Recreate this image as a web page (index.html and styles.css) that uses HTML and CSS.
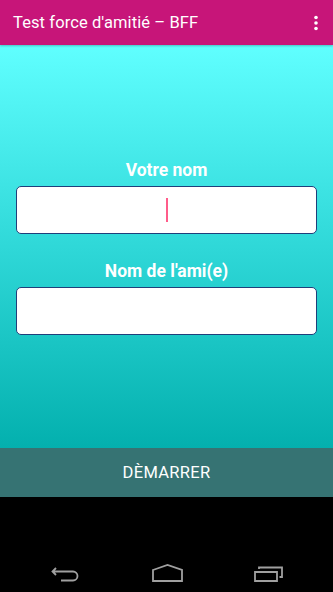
FILE: index.html
```html
<!DOCTYPE html>
<html>
<head>
<meta charset="utf-8">
<link rel="stylesheet" href="styles.css">
</head>
<body>
<div class="screen">
  <header class="appbar">
    <span class="title">Test force d'amitié – BFF</span>
    <svg class="menu" width="6" height="16" viewBox="0 0 6 16"><circle cx="3" cy="2.5" r="1.8" fill="#fff"/><circle cx="3" cy="8" r="1.8" fill="#fff"/><circle cx="3" cy="13.5" r="1.8" fill="#fff"/></svg>
  </header>
  <main class="content">
    <div class="group">
      <div class="label">Votre nom</div>
      <div class="field"><span class="cursor"></span></div>
    </div>
    <div class="group second">
      <div class="label">Nom de l'ami(e)</div>
      <div class="field"></div>
    </div>
  </main>
  <div class="start">DÈMARRER</div>
  <nav class="navbar">
    <svg class="nav" width="30" height="16" viewBox="0 0 30 16"><path d="M5 2 L1.5 5.5 L5 9 M1.5 5.5 H22 A4.5 4.5 0 0 1 22 14.5 H10" fill="none" stroke="#a0a0a0" stroke-width="1.8"/></svg>
    <svg class="nav" width="31" height="18" viewBox="0 0 31 18"><path d="M1 6 L15.5 1 L30 6 V17 H1 Z" fill="none" stroke="#a0a0a0" stroke-width="1.8"/></svg>
    <svg class="nav" width="30" height="16" viewBox="0 0 30 16"><path d="M1 6 H23 V15 H1 Z M5 3 V1.5 H28 V11 H25.5" fill="none" stroke="#a0a0a0" stroke-width="1.8"/></svg>
  </nav>
</div>
</body>
</html>
```
FILE: styles.css
```css
* { box-sizing: border-box; }
html, body { margin: 0; padding: 0; }
body { width: 333px; height: 592px; overflow: hidden; font-family: Roboto, "Liberation Sans", sans-serif; background: #000; }
.screen { display: flex; flex-direction: column; height: 592px; }
.appbar {
  height: 45px; background: #c71579; display: flex; align-items: center;
  justify-content: space-between; padding: 0 14px 0 13px; color: #fff;
  box-shadow: 0 1px 2px rgba(0,0,0,0.25); position: relative; z-index: 1;
}
.title { font-size: 16.5px; letter-spacing: 0.1px; }
.menu { display: block; margin-top: 1px; }
.content {
  height: 403px;
  background: linear-gradient(to bottom, #60ffff 0%, #2fd8d8 50%, #03b0ae 100%);
  padding: 114px 16px 0 16px;
}
.group { display: flex; flex-direction: column; align-items: center; }
.second { margin-top: 26px; }
.label { color: #fff; font-weight: bold; font-size: 17.5px; line-height: 22px; margin-bottom: 5px; }
.field {
  width: 301px; height: 48px; background: #fff; border: 1px solid #1f3f7a;
  border-radius: 5px; display: flex; align-items: center; justify-content: center;
}
.cursor { width: 2px; height: 24px; background: #ff5c8a; margin-left: 1px; }
.start {
  height: 49px; background: #367373; color: #fff; font-size: 16.5px;
  display: flex; align-items: center; justify-content: center; letter-spacing: 0.3px;
}
.navbar {
  flex: 1; background: #000; display: flex; align-items: flex-end;
  justify-content: space-between; padding: 0 49px 10px 51px;
}
.nav { display: block; }
```
